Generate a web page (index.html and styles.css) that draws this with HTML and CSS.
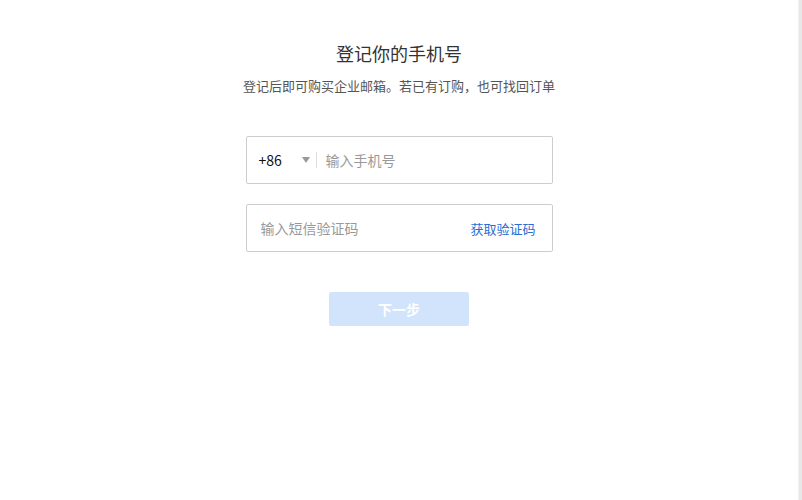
FILE: index.html
```html
<!DOCTYPE html>
<html lang="zh-CN">
<head>
<meta charset="utf-8" />
<title>登记手机号</title>
<link rel="stylesheet" href="styles.css">
</head>
<body>
	<div class="page">
		<div class="main">
			<h1 class="title">登记你的手机号</h1>
			<p class="subtitle">登记后即可购买企业邮箱。若已有订购，也可找回订单</p>

			<form class="form" name="register">
				<div class="field">
					<span class="code">+86</span>
					<span class="arrow"></span>
					<span class="sep"></span>
					<input class="textInput" type="text" placeholder="输入手机号" />
				</div>
				<div class="field smsField">
					<input class="textInput" type="text" placeholder="输入短信验证码" />
					<a class="getCode" href="#">获取验证码</a>
				</div>
				<div class="actions">
					<button class="button" type="button" disabled>下一步</button>
				</div>
			</form>
		</div>
		<div class="scrollbar"></div>
	</div>
</body>
</html>
```

FILE: styles.css
```css
html, body {
	margin: 0;
	padding: 0;
	background: #fff;
	font-family: "Noto Sans CJK SC", "Liberation Sans", sans-serif;
}

.page {
	display: flex;
	height: 500px;
}

.main {
	flex: 1;
	display: flex;
	flex-direction: column;
	align-items: center;
	padding-top: 40px;
}

.scrollbar {
	width: 3px;
	background: #e8e8e8;
	border-left: 1px solid #f2f2f2;
}

.title {
	margin: 0;
	font-size: 18px;
	font-weight: normal;
	color: #333;
	line-height: 26px;
}

.subtitle {
	margin: 11px 0 0;
	font-size: 13px;
	color: #555;
	line-height: 18px;
}

.form {
	margin-top: 41px;
	width: 307px;
}

.field {
	display: flex;
	align-items: center;
	height: 46px;
	border: 1px solid #cdcdcd;
	border-radius: 2px;
	padding: 0 12px;
	margin-bottom: 20px;
}

.code {
	font-size: 14px;
	color: #111;
	width: 43px;
}

.arrow {
	width: 0;
	height: 0;
	border-left: 4px solid transparent;
	border-right: 4px solid transparent;
	border-top: 6px solid #999;
}

.sep {
	width: 1px;
	height: 16px;
	background: #ddd;
	margin: 0 9px 0 6px;
}

.textInput {
	flex: 1;
	min-width: 0;
	border: none;
	outline: none;
	padding: 0;
	font-family: inherit;
	font-size: 14px;
	color: #333;
	background: transparent;
}

.textInput::placeholder {
	color: #999;
}

.smsField {
	padding: 0 16px 0 14px;
}

.getCode {
	font-size: 13px;
	color: #2b6ed2;
	text-decoration: none;
}

.actions {
	display: flex;
	justify-content: center;
	padding-top: 20px;
}

.button {
	width: 140px;
	height: 34px;
	border: none;
	border-radius: 2px;
	background: #d2e4fb;
	color: #fff;
	font-family: inherit;
	font-size: 14px;
	font-weight: bold;
}
```
